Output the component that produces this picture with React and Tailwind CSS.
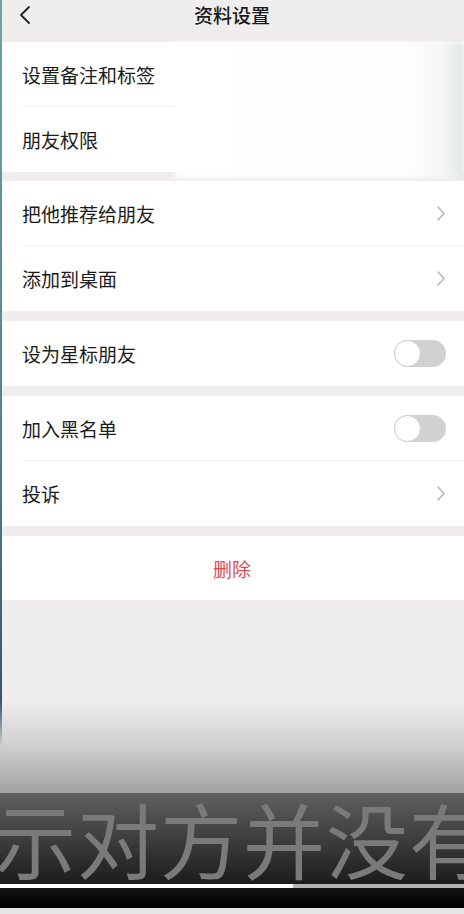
import React from "react";

const Chevron = () => (
  <svg width="10" height="17" viewBox="0 0 10 17" fill="none">
    <path d="M2 2 L8 8.5 L2 15" stroke="#b8b8b8" strokeWidth="1.6" strokeLinecap="round" strokeLinejoin="round" />
  </svg>
);

const Toggle = () => (
  <div className="w-[52px] h-[27px] rounded-full bg-[#d2d1d2] flex items-center">
    <div className="w-[27px] h-[27px] rounded-full bg-white border border-[#cfcfcf]" />
  </div>
);

const Row = ({ label, right, divider }) => (
  <div className="relative h-[65px] flex items-center justify-between pl-[22px] pr-[18px]">
    <span className="text-[19px] text-[#1b1b1b] leading-none">{label}</span>
    {right}
    {divider && <div className="absolute left-[22px] right-0 bottom-0 h-px bg-[#f0eff0]" />}
  </div>
);

export default function App() {
  return (
    <div
      className="relative w-[464px] h-[914px] overflow-hidden bg-[#efedee] flex flex-col gap-[10px]"
      style={{ fontFamily: '"Noto Sans CJK SC", "Noto Sans", sans-serif' }}
    >
      <div className="h-[42px] -mb-[10px] relative flex items-start justify-center pt-[5px]">
        <svg className="absolute left-[18px] top-[5px]" width="14" height="20" viewBox="0 0 14 20" fill="none">
          <path d="M11 2 L3 10 L11 18" stroke="#222" strokeWidth="1.8" strokeLinecap="round" strokeLinejoin="round" />
        </svg>
        <span className="text-[19px] font-medium text-[#1a1a1a] leading-none">资料设置</span>
      </div>

      <div className="bg-white -mb-px">
        <Row label="设置备注和标签" divider />
        <Row label="朋友权限" />
      </div>

      <div className="bg-white">
        <Row label="把他推荐给朋友" right={<Chevron />} divider />
        <Row label="添加到桌面" right={<Chevron />} />
      </div>

      <div className="bg-white">
        <Row label="设为星标朋友" right={<Toggle />} />
      </div>

      <div className="bg-white">
        <Row label="加入黑名单" right={<Toggle />} divider />
        <Row label="投诉" right={<Chevron />} />
      </div>

      <div className="bg-white h-[64px] flex items-center justify-center">
        <span className="text-[19px] text-[#e5484d] leading-none">删除</span>
      </div>

      {/* blurred overlay top right */}
      <div className="absolute left-[175px] top-[42px] w-[289px] h-[136px] bg-[linear-gradient(to_right,#ffffff_0%,#fefefe_80%,#f3f5f5_93%,#e2e7e7_100%)] blur-[2px]" />

      {/* left video edge strip */}
      <div className="absolute left-0 top-0 w-[2px] h-full bg-gradient-to-b from-[#6aa5a8] via-[#4f7f95] to-[#1f3550]" />

      {/* subtitle overlay */}
      <div className="absolute left-0 top-[700px] w-full h-[214px] flex flex-col">
        <div className="h-[93px] bg-gradient-to-b from-[#efedee]/0 via-[#d0cfd0] to-[#a3a2a3]" />
        <div className="relative h-[91px] bg-gradient-to-b from-[#606060] via-[#3e3e3e] to-[#1c1c1c] overflow-hidden">
          <div className="absolute left-[-6px] top-[4px] whitespace-nowrap text-[82px] leading-none text-[#7a7a7a] tracking-[1px]">
            示对方并没有
          </div>
        </div>
        <div className="h-[4px] flex">
          <div className="w-[293px] bg-white" />
          <div className="flex-1 bg-[#b4b4b4]" />
        </div>
        <div className="h-[20px] bg-gradient-to-b from-[#141414] to-[#030303]" />
        <div className="flex-1 bg-[#e6e6e6]" />
      </div>
    </div>
  );
}
